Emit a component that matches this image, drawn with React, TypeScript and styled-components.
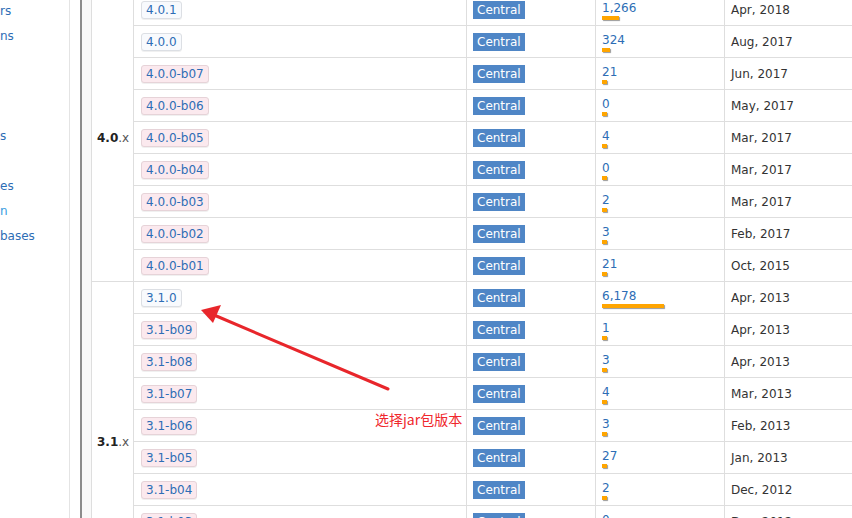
import styled, { createGlobalStyle } from "styled-components";

interface Release {
  version: string;
  usages: number;
  date: string;
}

interface Group {
  label: string;
  releases: Release[];
}

const MAX_USAGES = 6178;

const groups: Group[] = [
  {
    label: "4.0",
    releases: [
      { version: "4.0.1", usages: 1266, date: "Apr, 2018" },
      { version: "4.0.0", usages: 324, date: "Aug, 2017" },
      { version: "4.0.0-b07", usages: 21, date: "Jun, 2017" },
      { version: "4.0.0-b06", usages: 0, date: "May, 2017" },
      { version: "4.0.0-b05", usages: 4, date: "Mar, 2017" },
      { version: "4.0.0-b04", usages: 0, date: "Mar, 2017" },
      { version: "4.0.0-b03", usages: 2, date: "Mar, 2017" },
      { version: "4.0.0-b02", usages: 3, date: "Feb, 2017" },
      { version: "4.0.0-b01", usages: 21, date: "Oct, 2015" },
    ],
  },
  {
    label: "3.1",
    releases: [
      { version: "3.1.0", usages: 6178, date: "Apr, 2013" },
      { version: "3.1-b09", usages: 1, date: "Apr, 2013" },
      { version: "3.1-b08", usages: 3, date: "Apr, 2013" },
      { version: "3.1-b07", usages: 4, date: "Mar, 2013" },
      { version: "3.1-b06", usages: 3, date: "Feb, 2013" },
      { version: "3.1-b05", usages: 27, date: "Jan, 2013" },
      { version: "3.1-b04", usages: 2, date: "Dec, 2012" },
      { version: "3.1-b03", usages: 0, date: "Dec, 2012" },
      { version: "3.1-b02", usages: 1, date: "Nov, 2012" },
      { version: "3.1-b01", usages: 2, date: "Oct, 2012" },
    ],
  },
];

const columns = [42, 333, 129, 129, 129];

const sideLinks = ["rs", "ns", "", "", "", "s", "", "es", "n", "bases"];

const isBeta = (version: string) => version.includes("-b");

const barWidth = (usages: number) =>
  Math.round(5 + (usages * 57) / MAX_USAGES);

const App: React.FC = () => {
  return (
    <>
      <GlobalStyle />
      <Page>
        <Sidebar>
          <SideList>
            {sideLinks.map((link, i) => (
              <SideLink key={i} $active={i === 8}>
                {link || "\u00a0"}
              </SideLink>
            ))}
          </SideList>
        </Sidebar>
        <Gutter />
        <Content>
          <Table>
            <colgroup>
              {columns.map((w, i) => (
                <Col key={i} $width={w} />
              ))}
            </colgroup>
            <tbody>
              {groups.map((group) =>
                group.releases.map((release, i) => (
                  <tr key={release.version}>
                    {i === 0 ? (
                      <GroupCell rowSpan={group.releases.length}>
                        <GroupMajor>{group.label}</GroupMajor>
                        <GroupMinor>.x</GroupMinor>
                      </GroupCell>
                    ) : null}
                    <VersionCell>
                      <VersionBadge $beta={isBeta(release.version)}>
                        {release.version}
                      </VersionBadge>
                    </VersionCell>
                    <td>
                      <RepoBadge>Central</RepoBadge>
                    </td>
                    <td>
                      <UsageLink>{release.usages.toLocaleString("en-US")}</UsageLink>
                      <UsageBar style={{ width: barWidth(release.usages) }} />
                    </td>
                    <td>{release.date}</td>
                  </tr>
                ))
              )}
            </tbody>
          </Table>
        </Content>
        <Arrow width="852" height="518" viewBox="0 0 852 518">
          <line
            x1="388"
            y1="389"
            x2="214"
            y2="315"
            stroke="#e8262b"
            strokeWidth="3"
            strokeLinecap="round"
          />
          <polygon points="201,310 221,305 213,323" fill="#e8262b" />
        </Arrow>
        <Note>选择jar包版本</Note>
      </Page>
    </>
  );
};

const GlobalStyle = createGlobalStyle`
  html, body {
    margin: 0;
    padding: 0;
    background: #fff;
    overflow: hidden;
  }

  body {
    font-family: "DejaVu Sans", Verdana, sans-serif;
    font-size: 12px;
    color: #333;
  }
`;

const Page = styled.div`
  position: relative;
  display: flex;
  width: 852px;
  height: 518px;
  overflow: hidden;
`;

const Sidebar = styled.aside`
  flex: 0 0 69px;
  border-right: 1px solid #e4e4e4;
  overflow: hidden;
`;

const SideList = styled.ul`
  list-style: none;
  margin: -1px 0 0;
  padding: 0;
`;

const SideLink = styled.li<{ $active?: boolean }>`
  line-height: 25px;
  font-size: 12px;
  white-space: nowrap;
  color: ${({ $active }) => ($active ? "#3a9de0" : "#2d6db5")};
`;

const Gutter = styled.div`
  flex: 0 0 9px;
  margin-left: 10px;
  border-left: 2px solid #8c8c8c;
  background: #f9f9f9;
`;

const Content = styled.main`
  flex: 1;
  min-width: 0;
`;

const Table = styled.table`
  border-collapse: collapse;
  table-layout: fixed;
  width: 762px;
  margin-top: -7px;

  td {
    height: 31px;
    border: 1px solid #dedede;
    padding: 0 6px;
    vertical-align: middle;
    white-space: nowrap;
  }
`;

const Col = styled.col<{ $width: number }>`
  width: ${({ $width }) => $width}px;
`;

const GroupCell = styled.td`
  && {
    padding: 0 5px;
  }
`;

const GroupMajor = styled.b`
  color: #222;
  font-size: 12px;
`;

const GroupMinor = styled.span`
  color: #555;
`;

const VersionCell = styled.td`
  && {
    padding-left: 7px;
  }
`;

const VersionBadge = styled.span<{ $beta?: boolean }>`
  display: inline-block;
  padding: 1px 4px;
  line-height: 14px;
  border: 1px solid ${({ $beta }) => ($beta ? "#e6d3d8" : "#dcdfe4")};
  border-radius: 3px;
  background: ${({ $beta }) => ($beta ? "#fbe9ee" : "#f8fafd")};
  box-shadow: 0 1px 0 rgba(0, 0, 0, 0.06);
  color: #2d6db5;
`;

const RepoBadge = styled.span`
  display: inline-block;
  padding: 0 4px;
  line-height: 18px;
  background: #4f86c6;
  color: #fff;
`;

const UsageLink = styled.a`
  display: block;
  line-height: 14px;
  margin-top: 1px;
  color: #2d6db5;
`;

const UsageBar = styled.div`
  height: 4px;
  margin-top: 1px;
  background: #ffa500;
  box-shadow: 1px 1px 1px #9a9a9a;
`;

const Arrow = styled.svg`
  position: absolute;
  inset: 0;
  pointer-events: none;
`;

const Note = styled.span`
  position: absolute;
  left: 375px;
  top: 410px;
  font-family: "Noto Sans CJK SC", "DejaVu Sans", sans-serif;
  font-size: 14px;
  line-height: 19px;
  color: #f0282d;
`;

export default App;
